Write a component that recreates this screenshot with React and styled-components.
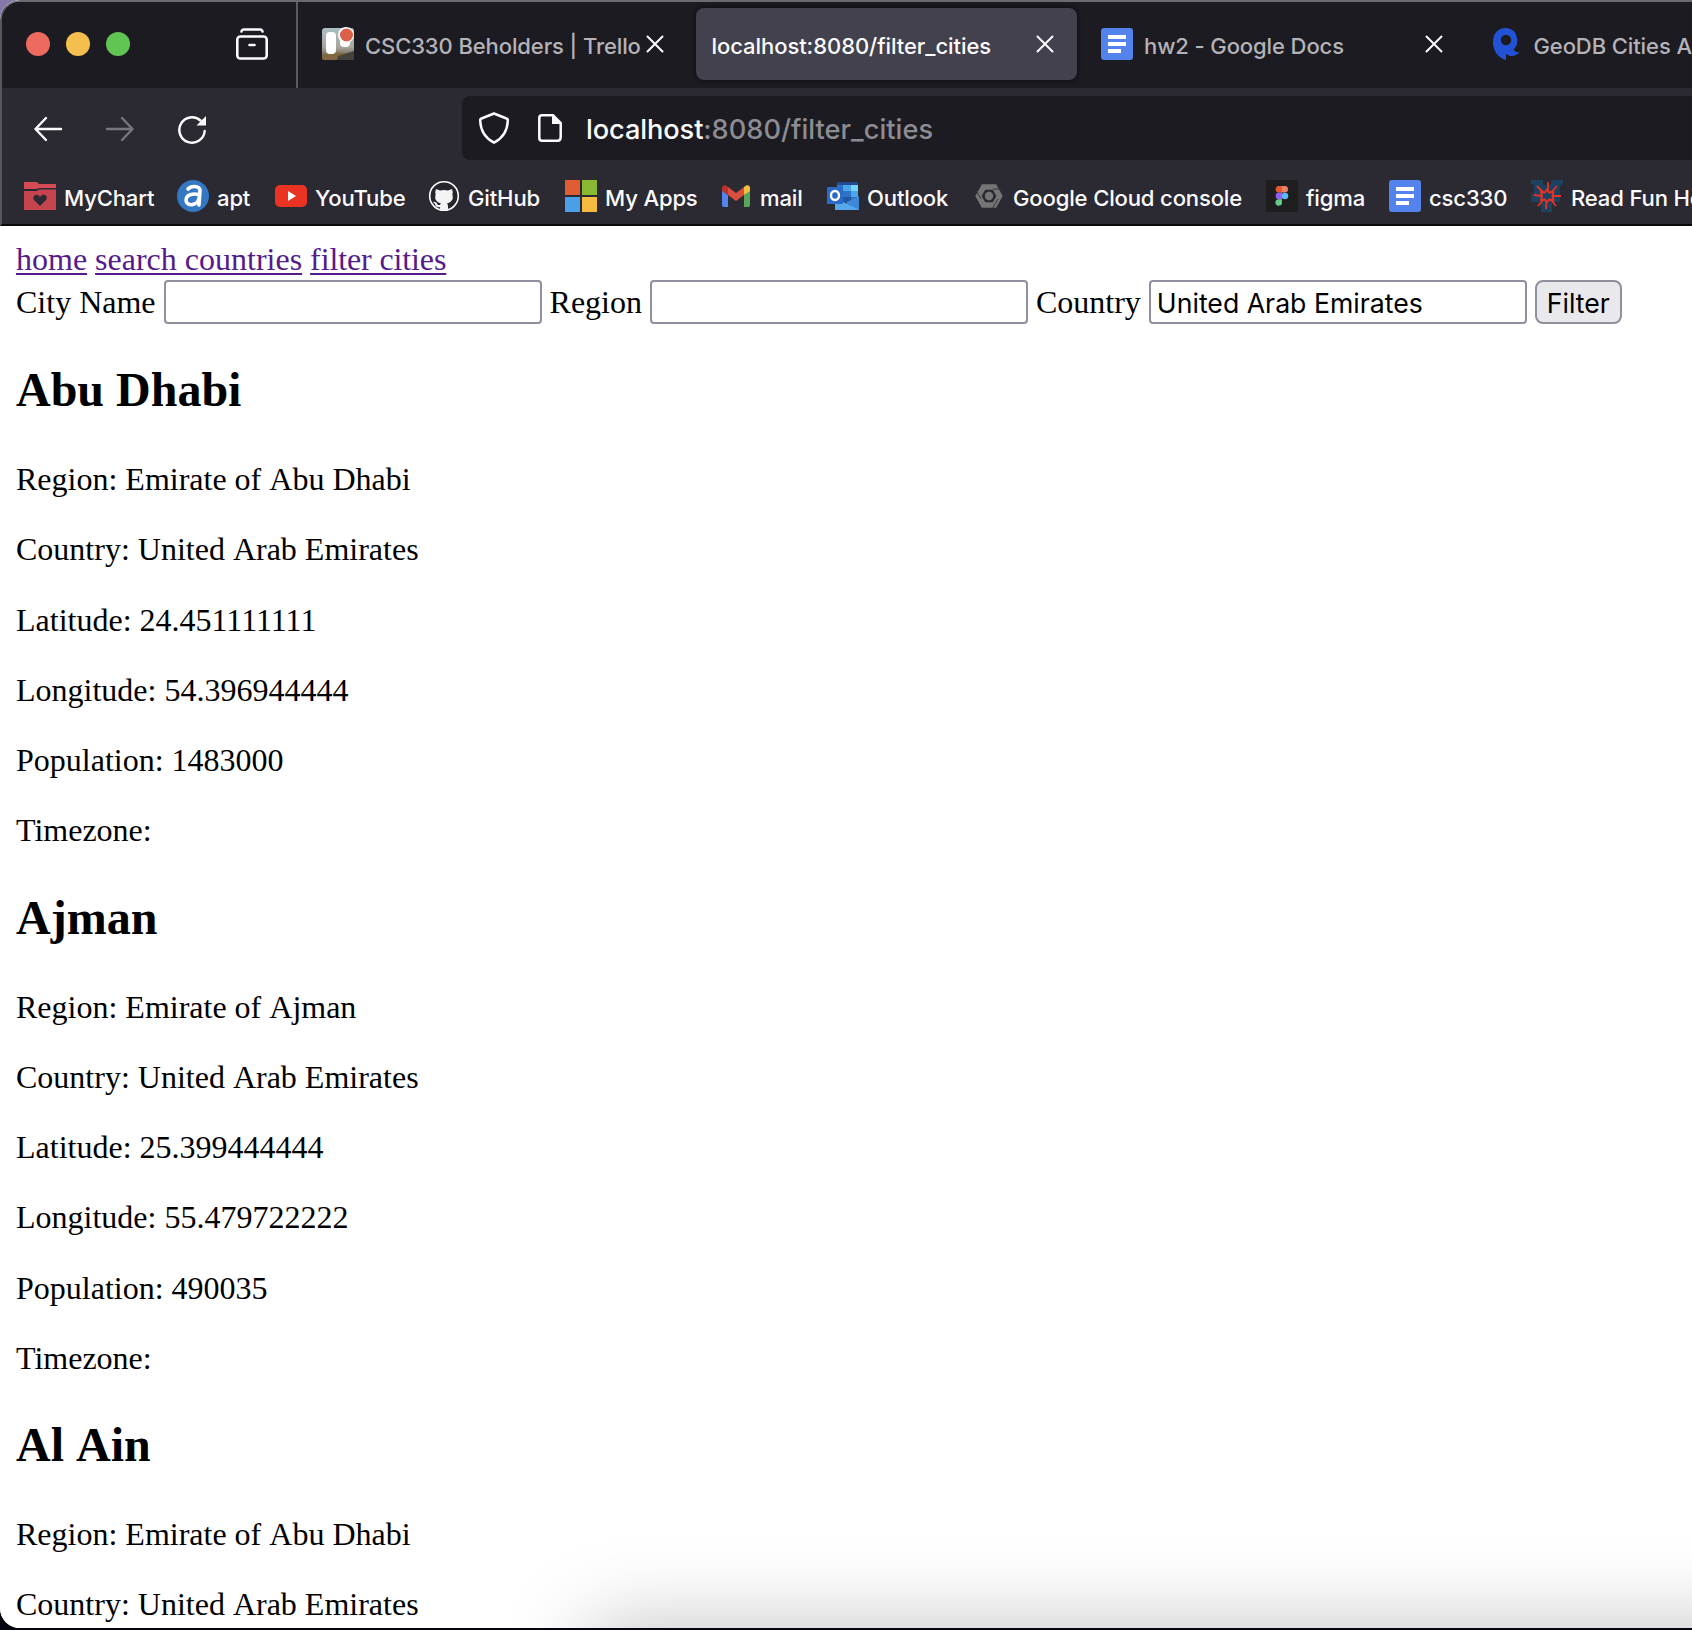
import React from "react";
import styled, { createGlobalStyle } from "styled-components";

const Global = createGlobalStyle`
  body { margin: 0; background: #8478a8; }
  * { box-sizing: border-box; }
`;

const ui = `Inter, "Liberation Sans", sans-serif`;

const Desktop = styled.div`
  width: 1692px;
  height: 1630px;
  overflow: hidden;
  background: linear-gradient(#8478a8 0 50%, #05050f 50%);
`;

const Window = styled.div`
  height: 1628px;
  width: 1692px;
  border-radius: 20px 0 0 20px;
  overflow: hidden;
  background: #fff;
  display: flex;
  flex-direction: column;
`;

const Chrome = styled.header`
  flex: none;
  height: 226px;
  border-left: 2px solid #57565c;
  border-top: 2px solid #6b6a70;
  border-bottom: 2px solid #0a0a0d;
  border-radius: 20px 0 0 0;
  background: #2b2a33;
  overflow: hidden;
  display: flex;
  flex-direction: column;
`;

const TabStrip = styled.div`
  height: 86px;
  flex: none;
  background: #1c1b22;
  display: flex;
  align-items: stretch;
`;

const WindowControls = styled.div`
  width: 296px;
  flex: none;
  border-right: 2px solid #5b5a61;
  display: flex;
  align-items: center;
  padding: 0 0 2px 24px;
  gap: 16px;
`;

const Dot = styled.span`
  width: 24px;
  height: 24px;
  border-radius: 50%;
  background: ${(p) => p.$color};
`;

const Recent = styled.svg`
  margin-left: 90px;
`;

const Tabs = styled.div`
  display: flex;
  flex: none;
  padding: 6px 0 8px 8px;
  gap: 8.5px;
`;

const TabBox = styled.div`
  width: 381px;
  height: 72px;
  flex: none;
  border-radius: 8px;
  padding: 0 16px;
  display: flex;
  align-items: center;
  background: ${(p) => (p.$active ? "#42414d" : "transparent")};
  box-shadow: ${(p) => (p.$active ? "0 0 5px rgba(0,0,0,.7)" : "none")};
  color: ${(p) => (p.$active ? "#fbfbfe" : "#b4b3b8")};
`;

const Favicon = styled.span`
  width: 32px;
  height: 32px;
  flex: none;
  margin-right: 11px;
  display: flex;
`;

const Fit = styled.svg`
  display: block;
  flex: none;
  overflow: visible;
`;

const Label = styled.span`
  white-space: nowrap;
  font: 450 ${(p) => p.$size}px/36px ${ui};
  letter-spacing: ${(p) => p.$track || 0}px;
`;

const TabTitle = styled(Label)`
  flex: 1;
  min-width: 0;
  padding-top: 4px;
`;

const CloseIcon = styled.svg`
  flex: none;
  margin-right: 7px;
`;

const NavBar = styled.div`
  height: 72px;
  flex: none;
  display: flex;
  align-items: center;
  padding-top: 8px;
`;

const NavButtons = styled.div`
  width: 460px;
  flex: none;
  display: flex;
  align-items: center;
  padding: 2px 0 0 32px;
  gap: 44px;
`;

const AddressBar = styled.div`
  flex: 1;
  height: 64px;
  border-radius: 8px 0 0 8px;
  background: #1c1b22;
  display: flex;
  align-items: center;
  padding-left: 17px;
  color: #8d8c92;
`;

const Url = styled(Label)`
  padding-top: 3px;
`;

const PageIcon = styled.svg`
  margin: 0 24px 0 29px;
`;

const Host = styled.span`
  color: #fbfbfe;
  letter-spacing: -0.1px;
`;

const Bookmarks = styled.nav`
  flex: none;
  height: 66px;
  display: flex;
  align-items: center;
  padding: 6px 0 0 22px;
  color: #fbfbfe;
`;

const Bookmark = styled.div`
  display: flex;
  flex: none;
  align-items: center;
  gap: 8px;
  width: ${(p) => p.$width}px;
`;

const BookmarkName = styled(Label)`
  padding-top: 3px;
`;

const Page = styled.main`
  position: relative;
  padding: 14px 16px 0;
  flex: 1;
  min-height: 0;
  overflow: hidden;
  color: #000;
  font: 32px/38px "Liberation Serif", "Times New Roman", serif;
  background: #fff;

  &::after {
    content: "";
    position: absolute;
    left: 590px;
    right: -300px;
    top: 100%;
    height: 300px;
    box-shadow: 0 0 80px rgba(0, 0, 0, 0.25);
  }
`;

const Links = styled.nav`
  display: flex;
  gap: 8px;
`;

const Link = styled.a`
  color: #551a8b;
  text-decoration: underline;
  text-decoration-thickness: 2px;
  text-underline-offset: 3px;
  letter-spacing: ${(p) => p.$track || 0}px;
`;

const Form = styled.form`
  display: flex;
  align-items: center;
  height: 44px;
  margin-top: 2px;
  gap: 8px;
`;

const Field = styled.label`
  display: flex;
  align-items: center;
  gap: 8px;
`;

const Input = styled.input`
  width: 378px;
  height: 44px;
  border: 2px solid #8f8f9d;
  border-radius: 4px;
  padding: 1px 6px 0;
  outline: 0;
  background: #fff;
  color: #000;
  font: 26.67px ${ui};
`;

const Submit = styled.button`
  width: 87px;
  height: 44px;
  border: 2px solid #8f8f9d;
  border-radius: 8px;
  padding: 1px 0 0;
  background: #e9e9ed;
  color: #000;
  font: 26.67px ${ui};
`;

const City = styled.section`
  height: 527.6px;
  padding-top: 38px;
`;

const Name = styled.h2`
  margin: 0;
  font-size: 48px;
  line-height: 56px;
  padding-bottom: 42px;
  font-kerning: none;
`;

const Fact = styled.p`
  margin: 0;
  height: 70.3px;
  font-kerning: ${(p) => (p.$kern ? "normal" : "none")};
`;

const Close = () => (
  <CloseIcon width="18" height="18" viewBox="0 0 18 18" stroke="#fbfbfe" strokeWidth="2" strokeLinecap="round">
    <path d="M1.5 1.5 16.5 16.5M16.5 1.5 1.5 16.5" />
  </CloseIcon>
);

const Docs = () => (
  <Fit width="32" height="32">
    <rect width="32" height="32" rx="3" fill="#5383ec" />
    <path d="M7 7h18v4H7zM7 14h18v4H7zM7 21h13v4H7z" fill="#fff" />
  </Fit>
);

const Trello = () => (
  <Fit width="32" height="32">
    <defs>
      <linearGradient id="hill" x1="0" y1="0" x2="0" y2="1">
        <stop offset="0" stopColor="#abc0c4" />
        <stop offset=".6" stopColor="#a9a69b" />
        <stop offset="1" stopColor="#574632" />
      </linearGradient>
    </defs>
    <rect width="32" height="32" rx="3" fill="url(#hill)" />
    <path d="M0 27l12-3 20 3v3q0 2-2 2H2q-2 0-2-2z" fill="#82683f" />
    <path d="M16 28l16-5v7q0 2-2 2H15z" fill="#44423a" />
    <rect x="4" y="4" width="10" height="22" rx="4" fill="#fff" />
    <rect x="18" y="5" width="10" height="14" rx="4" fill="#fff" />
    <circle cx="24" cy="7" r="8" fill="#fff" />
    <circle cx="24.500" cy="7" r="6.500" fill="#db5f49" />
  </Fit>
);

const Rapid = () => (
  <Fit width="32" height="32">
    <path fillRule="evenodd" d="M14.500 0C7 0 2 5.500 2 14c0 9 5 16 13 18v-6c4 3 10 3 13.500-2-3 .5-5-.5-6-2.500 2.500-2 3.800-5 3.800-9C26.300 5 21.500 0 14.500 0zm.5 6.800a5.200 5.200 0 1 1 0 10.400 5.200 5.200 0 0 1 0-10.400z" fill="#2252d6" />
  </Fit>
);

const MyChart = () => (
  <Fit width="32" height="32">
    <path d="M0 2h13l2 2h17v4H15l-2 1H0z" fill="#d44b55" />
    <path d="M0 11h13l2-1.500h17V30H0z" fill="#c6444e" />
    <path d="M16 26l-6-6c-2-3 1-6 4-5l2 2 2-2c4-1 6 2 4 5z" fill="#2b2a33" />
  </Fit>
);

const Apt = () => (
  <Fit width="32" height="32" fill="none" stroke="#fff" strokeWidth="3.600" strokeLinecap="round">
    <circle cx="16" cy="16" r="16" fill="#3578c2" stroke="none" />
    <path d="M11 9c3-3.500 11-3.500 12 1l-1 15M22 15c-4-2-13-1-13 5 0 7 12 6 13-2" />
  </Fit>
);

const YouTube = () => (
  <Fit width="32" height="32">
    <rect y="5" width="32" height="22" rx="5" fill="#ea3323" />
    <path d="M13 11v10l8-5z" fill="#fff" />
  </Fit>
);

const GitHub = () => (
  <Fit width="32" height="32">
    <circle cx="16" cy="16" r="14.300" fill="#25252b" stroke="#fff" strokeWidth="1.600" />
    <path d="M8 9l4 1.500q4-1 8 0L24 9q1.200 3 .4 5 2 8-5.400 9.500 1 1 1 3V30q-4 1.500-8 0v-3q-4 1-5-3l-2-2q3-1 5 3h2q0-1 1-1.500Q5.600 22 7.600 14 6.800 12 8 9z" fill="#f4f4f4" />
  </Fit>
);

const Microsoft = () => (
  <Fit width="32" height="32">
    <path d="M0 0h15v15H0z" fill="#e05c33" />
    <path d="M17 0h15v15H17z" fill="#8ab833" />
    <path d="M0 17h15v15H0z" fill="#4a9fe8" />
    <path d="M17 17h15v15H17z" fill="#f5bb41" />
  </Fit>
);

const Gmail = () => (
  <Fit width="32" height="32">
    <path d="M2 10l6 5v12H4q-2 0-2-2z" fill="#5383ec" />
    <path d="M24 15l6-5v15q0 2-2 2h-4z" fill="#58a55c" />
    <path d="M8 7l8 6 8-6v8l-8 6-8-6z" fill="#d94f3d" />
    <path d="M2 11V8c0-3 3-4 6-1v8z" fill="#b6342b" />
    <path d="M30 11V8c0-3-3-4-6-1v8z" fill="#f3bf42" />
  </Fit>
);

const Outlook = () => (
  <Fit width="32" height="32">
    <path d="M10 2h21v20H10z" fill="#2f74c8" />
    <path d="M10 2h21v3H10z" fill="#204b91" />
    <path d="M16 5h8v6h-8zM24 11h7v6h-7z" fill="#4ba6e8" />
    <path d="M24 5h7v6h-7z" fill="#76d5fb" />
    <path d="M16 17h8v5h-8z" fill="#2158a8" />
    <path d="M8 30V17l12 7 12-7v13z" fill="#55a9ea" />
    <path d="M32 16v14L18 23z" fill="#3f88d8" />
    <rect y="7" width="16" height="17" rx="1" fill="#2a6ac8" />
    <ellipse cx="8" cy="15.500" rx="4" ry="4.500" fill="none" stroke="#fff" strokeWidth="2.400" />
  </Fit>
);

const Cloud = () => (
  <Fit width="32" height="32" fill="none">
    <path d="M10.500 7h11l5 9-5 9h-11l-5-9z" stroke="#757575" strokeWidth="5.600" />
    <circle cx="16" cy="16" r="4.200" fill="#757575" />
    <path d="M20 9h9M25 19l-6 10M8 19 2.500 9.500" stroke="#38373e" strokeWidth="1" />
  </Fit>
);

const Figma = () => (
  <Fit width="32" height="32">
    <path d="M0 0h32v32H0z" fill="#1e1e1e" />
    <path d="M16 6h-3a3.300 3.300 0 0 0 0 6.600h3z" fill="#e15a33" />
    <path d="M16 6h2.700a3.300 3.300 0 0 1 0 6.600H16z" fill="#ee7f68" />
    <path d="M16 12.600h-3a3.300 3.300 0 0 0 0 6.600h3z" fill="#965cf6" />
    <circle cx="19" cy="16" r="3.300" fill="#5bb9f8" />
    <path d="M16 19.200h-3a3.300 3.300 0 1 0 3 3.300z" fill="#65cc88" />
  </Fit>
);

const Star = () => (
  <Fit width="32" height="32">
    <path d="M0 0h12v4l4 2 4-2V0h12v4l-3 2v16H21v10H10V22H0v-8l3-1V5l-3-1z" fill="#1c4260" />
    <path d="M17 2v9M15.500 21l-.5 8M3 15l8 1M21 16h9M6 6l7 7M26 6l-6.500 7M7 26l6-7M25 26l-5.500-7" stroke="#e93125" strokeWidth="1.800" />
    <path d="M16 9.500l2 3 4.500-.5-1 4 1 4-4.500-.5-2 3-2-3-4 .5 1-4-1-4 4 .5z" fill="none" stroke="#e93125" strokeWidth="1.800" />
  </Fit>
);

const tabs = [
  { title: "CSC330 Beholders | Trello", icon: Trello },
  { title: "localhost:8080/filter_cities", active: true },
  { title: "hw2 - Google Docs", icon: Docs },
  { title: "GeoDB Cities API", icon: Rapid },
];

const bookmarks = [
  ["MyChart", MyChart, 153],
  ["apt", Apt, 98],
  ["YouTube", YouTube, 153],
  ["GitHub", GitHub, 137],
  ["My Apps", Microsoft, 155],
  ["mail", Gmail, 107],
  ["Outlook", Outlook, 146],
  ["Google Cloud console", Cloud, 293],
  ["figma", Figma, 123],
  ["csc330", Docs, 142],
  ["Read Fun Home", Star, 200],
];

const cities = [
  { name: "Abu Dhabi", region: "Emirate of Abu Dhabi", lat: "24.451111111", lon: "54.396944444", pop: 1483000 },
  { name: "Ajman", region: "Emirate of Ajman", lat: "25.399444444", lon: "55.479722222", pop: 490035 },
  { name: "Al Ain", region: "Emirate of Abu Dhabi" },
];

export default function App() {
  return (
    <Desktop>
      <Global />
      <Window>
        <Chrome>
          <TabStrip>
            <WindowControls>
              <Dot $color="#ed6a5e" />
              <Dot $color="#f5bf4f" />
              <Dot $color="#61c554" />
              <Recent width="32" height="32" fill="none" stroke="#fbfbfe" strokeWidth="2.600" strokeLinecap="round">
                <path d="M5.500 3.500Q6 1.500 8 1.500h16q2 0 2.500 2M13.500 17h5" />
                <rect x="1.300" y="8.500" width="29.400" height="22" rx="3" />
              </Recent>
            </WindowControls>
            <Tabs>
              {tabs.map(({ title, icon: Icon, active }) => (
                <TabBox key={title} $active={active}>
                  {Icon && <Favicon><Icon /></Favicon>}
                  <TabTitle $size={22} $track={active ? -0.06 : -0.1}>{title}</TabTitle>
                  <Close />
                </TabBox>
              ))}
            </Tabs>
          </TabStrip>
          <NavBar>
            <NavButtons>
              <Fit width="28" height="26" fill="none" stroke="#fbfbfe" strokeWidth="2.400" strokeLinecap="round" strokeLinejoin="round">
                <path d="M12 2 1.500 13 12 24M1.500 13H27" />
              </Fit>
              <Fit width="28" height="26" fill="none" stroke="#77767c" strokeWidth="2.400" strokeLinecap="round" strokeLinejoin="round">
                <path d="M16 2 26.500 13 16 24M26.500 13H1" />
              </Fit>
              <Fit width="28" height="28" fill="none" stroke="#fbfbfe" strokeWidth="2.500" strokeLinecap="round">
                <path d="M22.500 5.500A12.700 12.700 0 1 0 26.700 16" />
                <path d="M28 1v9.500H18.500z" fill="#fbfbfe" stroke="none" />
              </Fit>
            </NavButtons>
            <AddressBar>
              <Fit width="30" height="32" fill="none" stroke="#fbfbfe" strokeWidth="2.500" strokeLinejoin="round">
                <path d="M15 1.500 27.500 6.500Q29 7 28.800 9 28 24 15 30.700 2 24 1.200 9 1 7 2.500 6.500z" />
              </Fit>
              <PageIcon width="24" height="28" fill="none" stroke="#fbfbfe" strokeWidth="2.500">
                <path d="M4 1.300h11L22.700 9v14q0 3.700-3 3.700H4q-2.700 0-2.700-2.700V4Q1.300 1.300 4 1.300z" />
                <path d="M14 1v9h9z" fill="#fbfbfe" stroke="none" />
              </PageIcon>
              <Url $size={27.2} $track={0.02}><Host>localhost</Host>:8080/filter_cities</Url>
            </AddressBar>
          </NavBar>
          <Bookmarks>
            {bookmarks.map(([name, Icon, width]) => (
              <Bookmark key={name} $width={width}>
                <Icon />
                <BookmarkName $size={22.1} $track={-0.17}>{name}</BookmarkName>
              </Bookmark>
            ))}
          </Bookmarks>
        </Chrome>
        <Page>
          <Links>
            <Link>home</Link>
            <Link>search countries</Link>
            <Link $track={-0.12}>filter cities</Link>
          </Links>
          <Form>
            <Field>City Name <Input /></Field>
            <Field>Region <Input /></Field>
            <Field>Country <Input defaultValue="United Arab Emirates" /></Field>
            <Submit type="button">Filter</Submit>
          </Form>
          {cities.map((c) => (
            <City key={c.name}>
              <Name>{c.name}</Name>
              <Fact>Region: {c.region}</Fact>
              <Fact>Country: United Arab Emirates</Fact>
              {c.lat && (
                <>
                  <Fact $kern>Latitude: {c.lat}</Fact>
                  <Fact $kern>Longitude: {c.lon}</Fact>
                  <Fact $kern>Population: {c.pop}</Fact>
                  <Fact $kern>Timezone:</Fact>
                </>
              )}
            </City>
          ))}
        </Page>
      </Window>
    </Desktop>
  );
}
